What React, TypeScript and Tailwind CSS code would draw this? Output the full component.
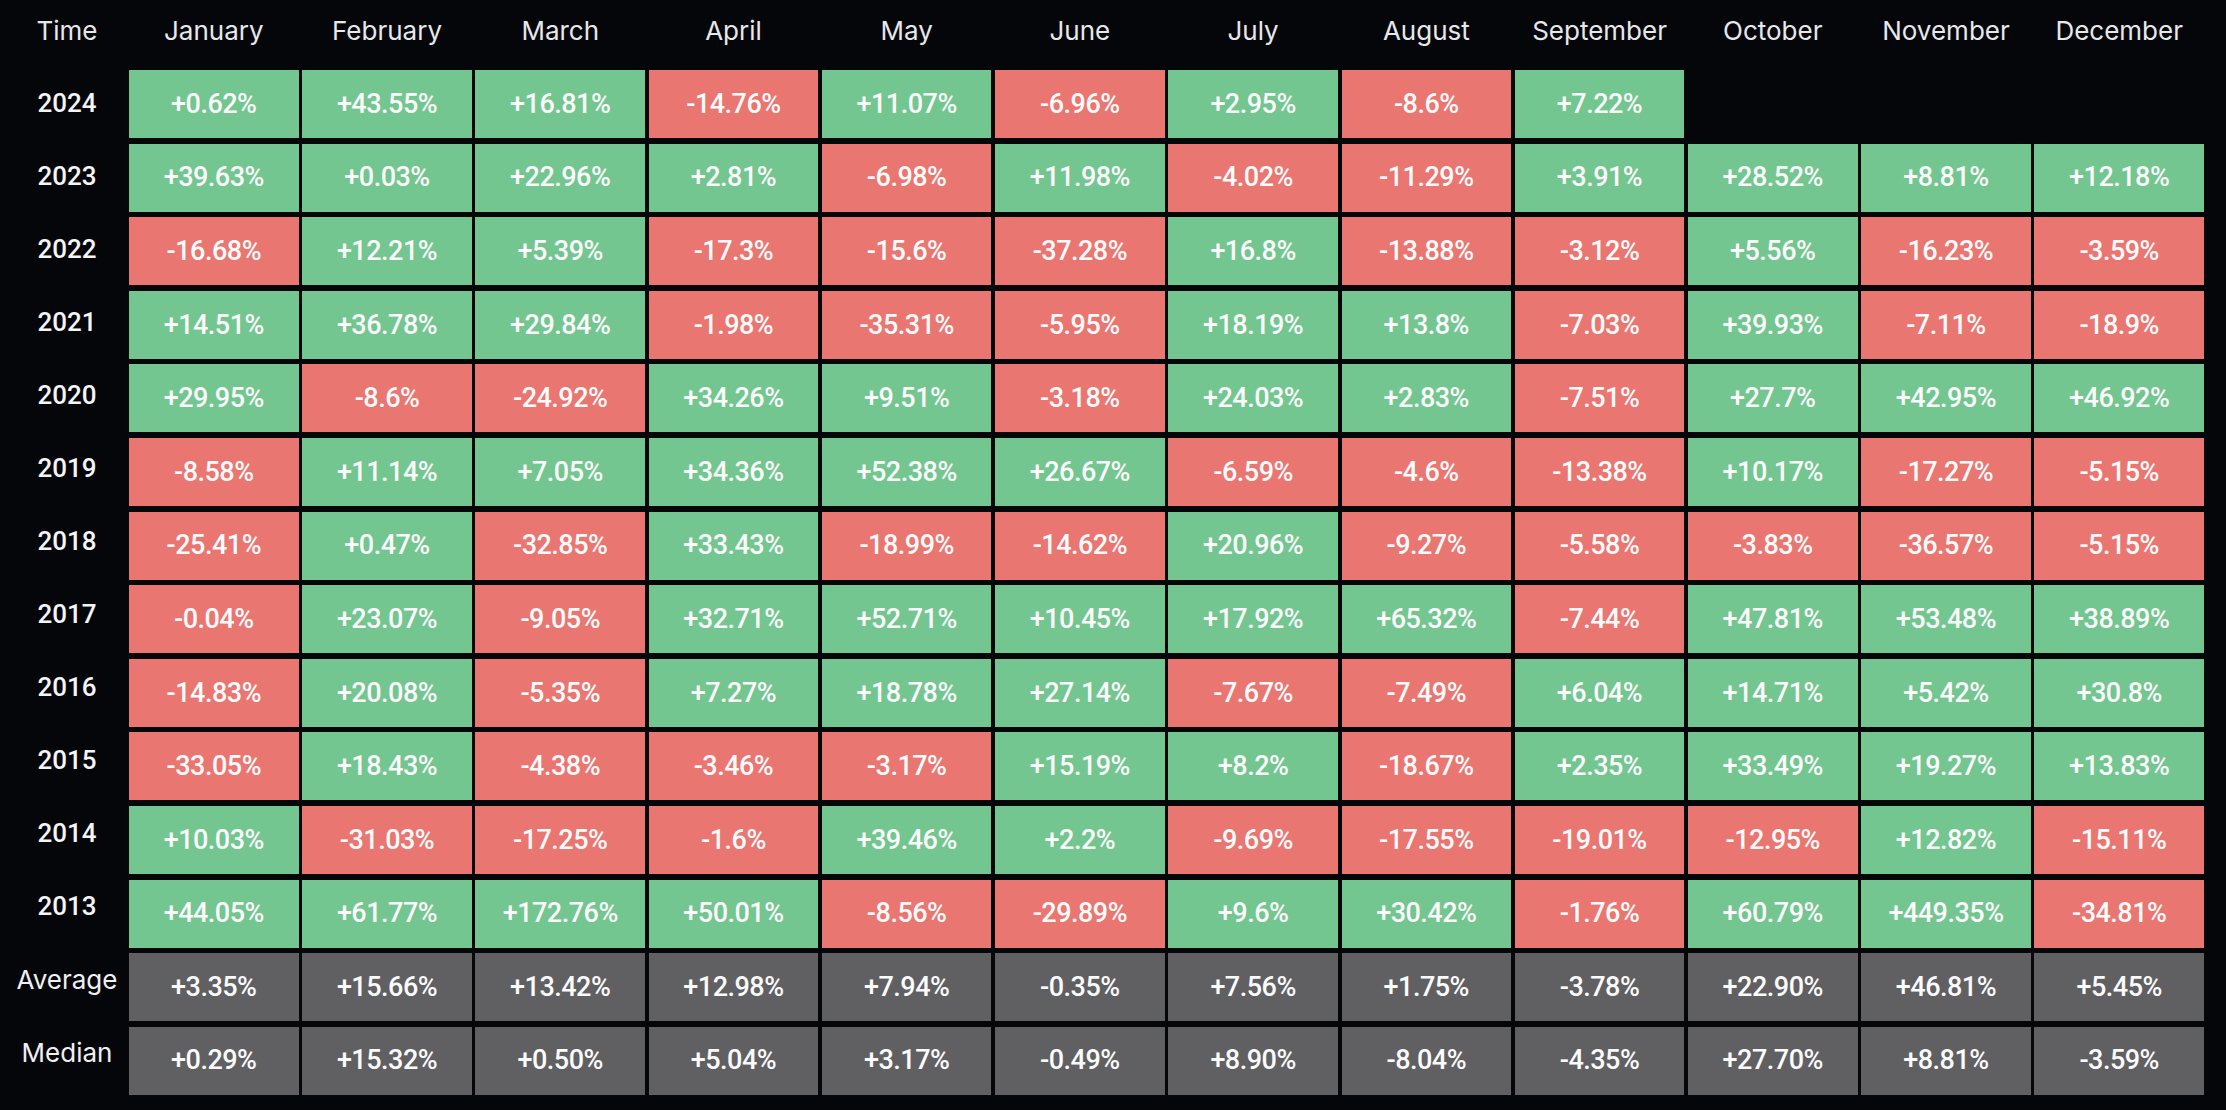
import React from "react";

const months = [
  "January",
  "February",
  "March",
  "April",
  "May",
  "June",
  "July",
  "August",
  "September",
  "October",
  "November",
  "December",
];

// yearly rows, newest first
const rows: { label: string; values: string[]; summary?: boolean }[] = [
  { label: "2024", values: ["+0.62%", "+43.55%", "+16.81%", "-14.76%", "+11.07%", "-6.96%", "+2.95%", "-8.6%", "+7.22%"] },
  { label: "2023", values: ["+39.63%", "+0.03%", "+22.96%", "+2.81%", "-6.98%", "+11.98%", "-4.02%", "-11.29%", "+3.91%", "+28.52%", "+8.81%", "+12.18%"] },
  { label: "2022", values: ["-16.68%", "+12.21%", "+5.39%", "-17.3%", "-15.6%", "-37.28%", "+16.8%", "-13.88%", "-3.12%", "+5.56%", "-16.23%", "-3.59%"] },
  { label: "2021", values: ["+14.51%", "+36.78%", "+29.84%", "-1.98%", "-35.31%", "-5.95%", "+18.19%", "+13.8%", "-7.03%", "+39.93%", "-7.11%", "-18.9%"] },
  { label: "2020", values: ["+29.95%", "-8.6%", "-24.92%", "+34.26%", "+9.51%", "-3.18%", "+24.03%", "+2.83%", "-7.51%", "+27.7%", "+42.95%", "+46.92%"] },
  { label: "2019", values: ["-8.58%", "+11.14%", "+7.05%", "+34.36%", "+52.38%", "+26.67%", "-6.59%", "-4.6%", "-13.38%", "+10.17%", "-17.27%", "-5.15%"] },
  { label: "2018", values: ["-25.41%", "+0.47%", "-32.85%", "+33.43%", "-18.99%", "-14.62%", "+20.96%", "-9.27%", "-5.58%", "-3.83%", "-36.57%", "-5.15%"] },
  { label: "2017", values: ["-0.04%", "+23.07%", "-9.05%", "+32.71%", "+52.71%", "+10.45%", "+17.92%", "+65.32%", "-7.44%", "+47.81%", "+53.48%", "+38.89%"] },
  { label: "2016", values: ["-14.83%", "+20.08%", "-5.35%", "+7.27%", "+18.78%", "+27.14%", "-7.67%", "-7.49%", "+6.04%", "+14.71%", "+5.42%", "+30.8%"] },
  { label: "2015", values: ["-33.05%", "+18.43%", "-4.38%", "-3.46%", "-3.17%", "+15.19%", "+8.2%", "-18.67%", "+2.35%", "+33.49%", "+19.27%", "+13.83%"] },
  { label: "2014", values: ["+10.03%", "-31.03%", "-17.25%", "-1.6%", "+39.46%", "+2.2%", "-9.69%", "-17.55%", "-19.01%", "-12.95%", "+12.82%", "-15.11%"] },
  { label: "2013", values: ["+44.05%", "+61.77%", "+172.76%", "+50.01%", "-8.56%", "-29.89%", "+9.6%", "+30.42%", "-1.76%", "+60.79%", "+449.35%", "-34.81%"] },
  { label: "Average", summary: true, values: ["+3.35%", "+15.66%", "+13.42%", "+12.98%", "+7.94%", "-0.35%", "+7.56%", "+1.75%", "-3.78%", "+22.90%", "+46.81%", "+5.45%"] },
  { label: "Median", summary: true, values: ["+0.29%", "+15.32%", "+0.50%", "+5.04%", "+3.17%", "-0.49%", "+8.90%", "-8.04%", "-4.35%", "+27.70%", "+8.81%", "-3.59%"] },
];

const cellColor = (value: string | undefined, summary?: boolean) => {
  if (!value) return "bg-transparent";
  if (summary) return "bg-[#606063]";
  return value.startsWith("-") ? "bg-[#e97671]" : "bg-[#73c690]";
};

const App: React.FC = () => {
  return (
    <div className="min-h-screen w-full bg-[#05060a] text-white">
      <div className="flex">
        {/* Row labels */}
        <div className="w-[129px] shrink-0 pl-2 pr-[3px]">
          <div className="h-[67px] pb-[6px] flex items-center justify-center font-['Inter',sans-serif] text-[26px] text-[#e6e8ea]">
            Time
          </div>
          {rows.map((row) => (
            <div
              key={row.label}
              className={
                "h-[73px] flex items-center justify-center text-[26px] " +
                (row.summary
                  ? "font-['Inter',sans-serif] text-[#eef0f2]"
                  : "font-['Roboto',sans-serif] font-medium text-[#f4f5f6]")
              }
            >
              {row.label}
            </div>
          ))}
        </div>

        {/* Month table */}
        <div className="w-[2075px]">
          <div className="grid grid-cols-12 gap-x-[3.6px] h-[70px] pb-[9px]">
            {months.map((m) => (
              <div
                key={m}
                className="flex items-center justify-center font-['Inter',sans-serif] text-[26px] text-[#e6e8ea]"
              >
                {m}
              </div>
            ))}
          </div>
          <div className="flex flex-col gap-y-[5.6px]">
            {rows.map((row) => (
              <div key={row.label} className="grid grid-cols-12 gap-x-[3.6px]">
                {months.map((m, i) => {
                  const v = row.values[i];
                  return (
                    <div
                      key={m}
                      className={
                        "h-[68px] flex items-center justify-center font-['Roboto',sans-serif] font-medium text-[27px] tracking-[-0.5px] text-[#fbfbfb] " +
                        cellColor(v, row.summary)
                      }
                    >
                      {v ?? ""}
                    </div>
                  );
                })}
              </div>
            ))}
          </div>
        </div>
      </div>
    </div>
  );
};

export default App;
